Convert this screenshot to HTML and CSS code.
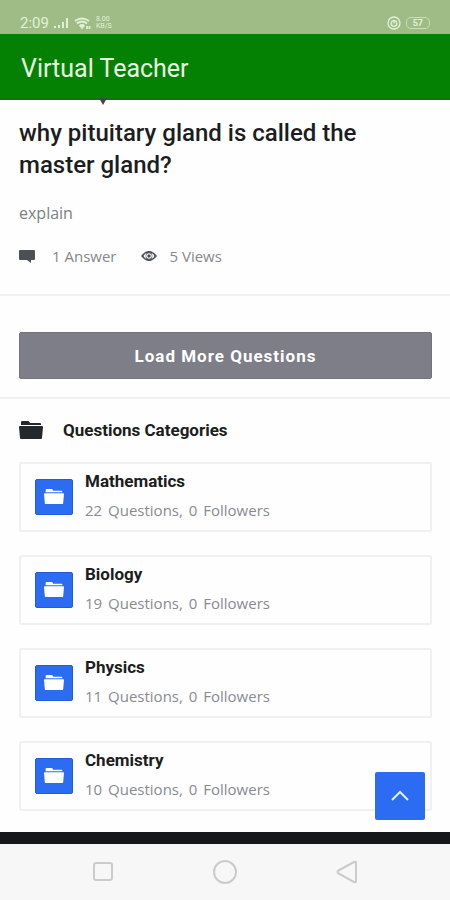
FILE: index.html
```html
<!DOCTYPE html>
<html lang="en">
<head>
<meta charset="utf-8">
<meta name="viewport" content="width=device-width, initial-scale=1">
<title>Virtual Teacher</title>
<link rel="stylesheet" href="styles.css">
</head>
<body>
<svg class="symbols" aria-hidden="true">
  <symbol id="folder" viewBox="0 0 24 18">
    <path d="M2 4V1Q2 0 3 0h6q1 0 1.500 1l.5 1h10q1 0 1 1v1z"/>
    <path d="M1 5h22q1 0 1 1l-1 11q0 1-1 1H2q-1 0-1-1L0 6q0-1 1-1z"/>
  </symbol>
</svg>
<div class="status">
  <div class="status-group">
    <span class="clock">2:09</span>
    <svg width="15" height="12" viewBox="0 0 15 12" fill="currentColor"><path d="M0 9h2v2H0zM4 8h2v3H4zM8 5h2v6H8zM12 1h2v10h-2z"/></svg>
    <svg width="17" height="13" viewBox="0 0 17 13" fill="none" stroke="currentColor" stroke-width="1.800"><path d="M1 4q7-5 14 0M3 6.500q5-4 10 0M5.500 9q2.500-2 5 0"/><path d="M7 9.500h2L8 11zM13 9v3M15.500 9v3"/></svg>
    <span class="speed"><span>8.00</span><span>KB/S</span></span>
  </div>
  <div class="status-group">
    <svg width="14" height="14" viewBox="0 0 14 14" fill="none" stroke="currentColor" stroke-width="1.300"><circle cx="7" cy="7" r="6"/><circle cx="7" cy="7.500" r="2.800"/><path d="M7 4v3.500"/></svg>
    <span class="battery">57</span>
  </div>
</div>
<header class="appbar">
  <h1>Virtual Teacher</h1>
  <svg class="pointer" width="8" height="7" viewBox="0 0 8 7"><path d="M0 0h8L4 7z"/></svg>
</header>
<main>
  <article class="question">
    <h2>why pituitary gland is called the master gland?</h2>
    <p>explain</p>
    <div class="meta">
      <span class="stat answers"><svg width="16" height="13" viewBox="0 0 16 13"><path d="M1 0h14q1 0 1 1v8q0 1-1 1h-3v3L8 10H1Q0 10 0 9V1q0-1 1-1z"/></svg>1 Answer</span>
      <span class="stat views"><svg width="16" height="10" viewBox="0 0 16 10"><path fill-rule="evenodd" d="M0 5Q8-5 16 5Q8 15 0 5zM2.500 5Q4 2.500 5.500 2Q3.800 5 5.500 8Q4 7.500 2.500 5zM13.500 5Q12 2.500 10.500 2Q12.200 5 10.500 8Q12 7.500 13.500 5zM8 2.200a2.800 2.800 0 1 0 .01 0z"/><circle cx="8" cy="5" r="1.700"/></svg>5 Views</span>
    </div>
  </article>
  <div class="more"><button type="button">Load More Questions</button></div>
  <section class="categories">
    <h2><svg width="24" height="18"><use href="#folder"/></svg>Questions Categories</h2>
    <ul>
      <li><a href="#"><span class="tile"><svg width="20" height="15"><use href="#folder"/></svg></span><span class="info"><strong>Mathematics</strong><span>22 Questions, 0 Followers</span></span></a></li>
      <li><a href="#"><span class="tile"><svg width="20" height="15"><use href="#folder"/></svg></span><span class="info"><strong>Biology</strong><span>19 Questions, 0 Followers</span></span></a></li>
      <li><a href="#"><span class="tile"><svg width="20" height="15"><use href="#folder"/></svg></span><span class="info"><strong>Physics</strong><span>11 Questions, 0 Followers</span></span></a></li>
      <li><a href="#"><span class="tile"><svg width="20" height="15"><use href="#folder"/></svg></span><span class="info"><strong>Chemistry</strong><span>10 Questions, 0 Followers</span></span></a></li>
    </ul>
  </section>
  <button class="to-top" type="button" aria-label="Back to top"><svg width="20" height="12" viewBox="0 0 20 12"><path d="M2 10l8-8 8 8"/></svg></button>
</main>
<nav class="keys">
  <button type="button" aria-label="Recent apps"><svg width="24" height="24" viewBox="0 0 24 24"><rect x="3" y="3" width="18" height="17" rx="2"/></svg></button>
  <button type="button" aria-label="Home"><svg width="24" height="24" viewBox="0 0 24 24"><circle cx="12" cy="12" r="11"/></svg></button>
  <button type="button" aria-label="Back"><svg width="24" height="24" viewBox="0 0 24 24"><path d="M3.500 10.500L19 2q2-1 2 1v18q0 2-2 1L3.500 13.500q-2-1.500 0-3z"/></svg></button>
</nav>
</body>
</html>
```
FILE: styles.css
```css
* { box-sizing: border-box; }
body {
  margin: 0;
  min-height: 100vh;
  display: flex;
  flex-direction: column;
  background: #fefefe;
  color: #1c1d20;
  font-family: Roboto, sans-serif;
}
h1, h2, p, ul { margin: 0; padding: 0; }
button { border: 0; padding: 0; font-family: inherit; }
.symbols { position: absolute; width: 0; height: 0; }

.status {
  display: flex;
  flex: none;
  justify-content: space-between;
  align-items: center;
  height: 34px;
  padding: 12px 20px 0;
  background: #9fbc86;
  color: #e2f1d6;
}
.status-group { display: flex; align-items: center; gap: 5px; }
.clock { font-size: 15px; }
.speed { display: flex; flex-direction: column; font-size: 7px; line-height: 7px; }
.battery {
  padding: 0 6px;
  border: 1px solid #c8deb6;
  border-radius: 5px;
  font-size: 9px;
  font-weight: 700;
  line-height: 10px;
}

.appbar {
  position: relative;
  display: flex;
  flex: none;
  align-items: center;
  height: 66px;
  padding: 4px 21px 0;
  background: #048003;
  border-bottom: 2px solid #16700f;
  color: #e8fbe4;
}
.appbar h1 { font-size: 25px; font-weight: 400; }
.pointer { position: absolute; left: 99px; top: 100%; fill: #3c4a3c; }

main { position: relative; flex: 1 0 auto; }
.question { padding: 17px 19px 28px; border-bottom: 2px solid #f1f1f2; }
.question h2 { font-size: 24px; font-weight: 500; line-height: 32px; }
.question p { margin-top: 20px; font-family: "Open Sans", sans-serif; font-size: 16px; line-height: 24px; color: #7c7f84; }
.meta {
  display: flex;
  gap: 25px;
  margin-top: 21px;
  font-family: "Open Sans", sans-serif;
  font-size: 15px;
  line-height: 20px;
  color: #85888d;
}
.stat { display: flex; align-items: center; }
.stat svg { fill: #4a5055; }
.answers { gap: 17px; }
.views { gap: 12px; }

.more { padding: 36px 18px 18px 19px; border-bottom: 2px solid #f0f0f1; }
.more button {
  width: 100%;
  height: 47px;
  border: 1px solid #72737c;
  border-radius: 2px;
  background: #7d7e87;
  color: #fff;
  font-size: 17px;
  font-weight: 700;
  letter-spacing: 1px;
}

.categories { padding: 19px 18px 20px 19px; }
.categories h2 { display: flex; align-items: center; gap: 20px; font-size: 17px; font-weight: 700; line-height: 24px; }
.categories h2 svg { fill: #23282d; }
.categories ul { display: grid; gap: 23px; margin-top: 20px; list-style: none; }
.categories a {
  display: flex;
  align-items: center;
  gap: 12px;
  padding: 5px 14px 9px;
  border: 2px solid #f0f0f1;
  border-radius: 2px;
  color: inherit;
  text-decoration: none;
}
.tile {
  display: grid;
  place-items: center;
  width: 38px;
  height: 36px;
  margin-top: 3px;
  border: 1px solid #235bd5;
  border-radius: 2px;
  background: #2c6cf2;
  fill: #fff;
}
.info { display: flex; flex-direction: column; gap: 6px; }
.info strong { font-size: 17px; font-weight: 700; line-height: 24px; }
.info span { font-family: "Open Sans", sans-serif; font-size: 15px; line-height: 22px; word-spacing: 2px; color: #888b90; }

.to-top {
  position: absolute;
  right: 25px;
  bottom: 12px;
  display: grid;
  place-items: center;
  width: 50px;
  height: 48px;
  border-radius: 2px;
  background: #2b6cf3;
}
.to-top path { fill: none; stroke: #e2efff; stroke-width: 2; }

.keys {
  display: flex;
  flex: none;
  justify-content: center;
  gap: 98px;
  height: 68px;
  border-top: 12px solid #16171b;
  background: #f7f7f7;
}
.keys button { display: grid; place-items: center; width: 24px; background: none; }
.keys svg { fill: none; stroke: #cbcbcb; stroke-width: 2; }
```
